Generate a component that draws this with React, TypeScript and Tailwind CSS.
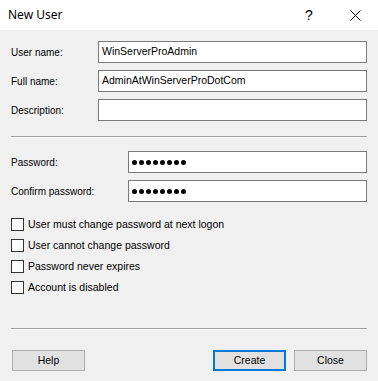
import React from "react";

const FIELDS = [
  { label: "User name:", value: "WinServerProAdmin" },
  { label: "Full name:", value: "AdminAtWinServerProDotCom" },
  { label: "Description:", value: "" },
];

const PASSWORDS = ["Password:", "Confirm password:"];

const OPTIONS = [
  "User must change password at next logon",
  "User cannot change password",
  "Password never expires",
  "Account is disabled",
];

// Etched separator line between sections
function Separator() {
  return (
    <div className="mx-[11px] h-[2px] border-t border-[#a0a0a0] border-b border-b-white" />
  );
}

function Dots() {
  return (
    <div className="flex gap-[2px] items-center">
      {Array.from({ length: 8 }).map((_, i) => (
        <span key={i} className="block w-[5px] h-[5px] rounded-full bg-black" />
      ))}
    </div>
  );
}

export default function App() {
  return (
    <div className="w-[378px] h-[381px] bg-[#f0f0f0] text-[10.5px] text-black flex flex-col font-['Liberation_Sans',Arial,sans-serif]">
      {/* Title bar */}
      <div className="h-[30px] bg-white flex items-center shrink-0">
        <span className="pl-[8px] text-[12px] flex-1 font-['Noto_Sans','Liberation_Sans',sans-serif]">
          New User
        </span>
        <span className="w-[46px] text-center text-[14px] leading-none">?</span>
        <span className="w-[46px] flex justify-center">
          <svg width="11" height="11" viewBox="0 0 11 11">
            <path d="M0.5 0.5 L10.5 10.5 M10.5 0.5 L0.5 10.5" stroke="#000" strokeWidth="1" fill="none" />
          </svg>
        </span>
      </div>

      {/* Name fields */}
      <div className="flex flex-col gap-[7px] pt-[11px] px-[11px]">
        {FIELDS.map((f) => (
          <div key={f.label} className="flex items-center h-[22px]">
            <span className="w-[87px] text-[10px]">{f.label}</span>
            <div className="flex-1 h-[22px] bg-white border border-[#7a7a7a] flex items-center pl-[3px]">
              {f.value}
            </div>
          </div>
        ))}
      </div>

      <div className="mt-[15px]">
        <Separator />
      </div>

      {/* Password fields */}
      <div className="flex flex-col gap-[7px] pt-[13px] px-[11px]">
        {PASSWORDS.map((p) => (
          <div key={p} className="flex items-center h-[22px]">
            <span className="w-[117px] text-[10px]">{p}</span>
            <div className="flex-1 h-[22px] bg-white border border-[#7a7a7a] flex items-center pl-[3px]">
              <Dots />
            </div>
          </div>
        ))}
      </div>

      {/* Options */}
      <div className="flex flex-col gap-[8px] pt-[16px] pl-[11px]">
        {OPTIONS.map((o) => (
          <div key={o} className="flex items-center h-[13px] gap-[4px]">
            <span className="block w-[13px] h-[13px] bg-white border border-[#333333]" />
            <span>{o}</span>
          </div>
        ))}
      </div>

      <div className="mt-[34px]">
        <Separator />
      </div>

      {/* Buttons */}
      <div className="flex items-center pt-[20px] pl-[12px] pr-[11px]">
        <button className="w-[73px] h-[21px] bg-[#e1e1e1] border border-[#adadad]">Help</button>
        <div className="flex-1" />
        <button className="w-[73px] h-[21px] bg-[#e1e1e1] border-2 border-[#0078d7]">Create</button>
        <button className="ml-[8px] w-[73px] h-[21px] bg-[#e1e1e1] border border-[#adadad]">Close</button>
      </div>
    </div>
  );
}
